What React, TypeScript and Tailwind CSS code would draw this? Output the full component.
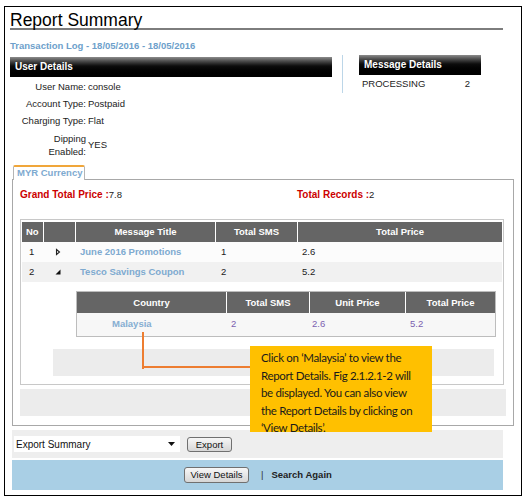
import React from 'react';

const userRows: [string, string][] = [
  ['User Name:', 'console'],
  ['Account Type:', 'Postpaid'],
  ['Charging Type:', 'Flat'],
];

const RightArrow = () => (
  <svg width="6" height="8" viewBox="0 0 6 8">
    <path d="M1.5 1.5 L4.5 4 L1.5 6.5 Z" fill="#fff" stroke="#222" strokeWidth="1.1" />
  </svg>
);

const DownArrow = () => (
  <svg width="6" height="6" viewBox="0 0 6 6">
    <path d="M5.5 0.5 L5.5 5.5 L0.5 5.5 Z" fill="#111" />
  </svg>
);

export default function App() {
  return (
    <div className="w-[526px] h-[500px] bg-white pt-[6px] pl-[4px] font-['Liberation_Sans',Arial,sans-serif] text-[9.5px] text-[#222]">
      <div className="relative w-[518px] h-[490px] border border-black">
        {/* title */}
        <div className="ml-[5px] mt-[5px] w-[493px]">
          <h1 className="h-[16px] text-[17.5px] leading-[16px] text-black">Report Summary</h1>
          <div className="h-[2px] bg-[#7d7d7d]" />
        </div>

        <div className="ml-[5px] mt-[10px] leading-[12px] font-bold text-[#6d9fcb]">
          Transaction Log - 18/05/2016 - 18/05/2016
        </div>

        {/* user + message details */}
        <div className="mt-[3px] h-[110px] flex">
          <div className="ml-[5px] w-[322px] pt-[2px]">
            <div className="h-[20px] pl-[5px] leading-[20px] text-[10px] font-bold text-white bg-linear-to-b from-[#8c8c8c] via-[#0d0d0d] via-45% to-black">
              User Details
            </div>
            <div className="mt-[4px] flex flex-col gap-[5px]">
              {userRows.map(([label, value]) => (
                <div key={label} className="flex leading-[12px]">
                  <span className="w-[76px] text-right">{label}</span>
                  <span className="ml-[2px]">{value}</span>
                </div>
              ))}
              <div className="flex items-center">
                <span className="w-[76px] text-right leading-[13px]">
                  Dipping
                  <br />
                  Enabled:
                </span>
                <span className="ml-[2px]">YES</span>
              </div>
            </div>
          </div>
          <div className="ml-[10px] w-px h-[38px] bg-[#bcd6e8]" />
          <div className="ml-[16px] w-[122px]">
            <div className="h-[20px] pl-[5px] leading-[20px] text-[10px] font-bold text-white bg-linear-to-b from-[#8c8c8c] via-[#0d0d0d] via-45% to-black">
              Message Details
            </div>
            <div className="mt-[3px] flex justify-between pl-[3px] pr-[11px] leading-[12px]">
              <span>PROCESSING</span>
              <span>2</span>
            </div>
          </div>
        </div>

        {/* tab */}
        <div className="relative z-10 ml-[8px] w-[72px] h-[15px] bg-white border-t-2 border-t-[#f0a63a] border-x border-x-[#b5b5b5] rounded-t-[2px] pl-[3px] leading-[12px] font-bold text-[#7eaad0]">
          MYR Currency
        </div>
        <div className="-mt-px ml-[7px] w-[502px] h-[247px] border border-[#a8a8a8]">
          <div className="mt-[9px] pl-[7px] flex leading-[12px]">
            <span className="w-[277px]">
              <span className="text-[10px] font-bold text-[#cc0000]">Grand Total Price :</span>
              <span>7.8</span>
            </span>
            <span>
              <span className="text-[10px] font-bold text-[#cc0000]">Total Records :</span>
              <span>2</span>
            </span>
          </div>

          {/* records table */}
          <div className="mt-[18px] ml-[7px] w-[484px] h-[166px] border border-[#c8c8c8] px-px pt-[2px]">
            <div className="flex gap-px h-[20px] leading-[20px] font-bold text-white">
              <div className="w-[21px] bg-[#656565] pl-[4px]">No</div>
              <div className="w-[31px] bg-[#656565]" />
              <div className="w-[139px] bg-[#656565] text-center">Message Title</div>
              <div className="w-[81px] bg-[#656565] text-center">Total SMS</div>
              <div className="w-[204px] bg-[#656565] text-center">Total Price</div>
            </div>
            <div className="flex h-[20px] items-center bg-[#fcfcfc]">
              <div className="w-[22px] pl-[7px]">1</div>
              <div className="w-[32px] pl-[11px] flex items-center"><RightArrow /></div>
              <div className="w-[140px] pl-[4px] font-bold text-[#7eaad0]">June 2016 Promotions</div>
              <div className="w-[82px] pl-[5px]">1</div>
              <div className="pl-[4px]">2.6</div>
            </div>
            <div className="flex h-[20px] items-center bg-[#f1f1f1]">
              <div className="w-[22px] pl-[7px]">2</div>
              <div className="w-[32px] pl-[11px] flex items-center"><DownArrow /></div>
              <div className="w-[140px] pl-[4px] font-bold text-[#7eaad0]">Tesco Savings Coupon</div>
              <div className="w-[82px] pl-[5px]">2</div>
              <div className="pl-[4px]">5.2</div>
            </div>

            {/* country sub table */}
            <div className="mt-[9px] ml-[54px] w-[420px] border border-[#bdbdbd]">
              <div className="flex gap-px h-[21px] leading-[21px] font-bold text-white bg-white">
                <div className="w-[149px] bg-[#656565] text-center">Country</div>
                <div className="w-[82px] bg-[#656565] text-center">Total SMS</div>
                <div className="w-[95px] bg-[#656565] text-center">Unit Price</div>
                <div className="w-[89px] bg-[#656565] text-center">Total Price</div>
              </div>
              <div className="flex h-[23px] items-center bg-[#f7f7f7] text-[#7b5fb0]">
                <div className="w-[150px] pl-[35px] font-bold text-[#86aed2]">Malaysia</div>
                <div className="w-[83px] pl-[4px]">2</div>
                <div className="w-[96px] pl-[2px]">2.6</div>
                <div className="pl-[4px]">5.2</div>
              </div>
            </div>
            <div className="mt-[12px] ml-[31px] w-[441px] h-[27px] bg-[#ececec]" />
          </div>

          <div className="mt-[4px] ml-[7px] w-[486px] h-[27px] bg-[#ececec]" />
        </div>

        {/* export */}
        <div className="mt-[4px] ml-[7px] w-[491px] h-[28px] bg-[#eeeeee] flex items-center pl-[2px]">
          <div className="w-[166px] h-[16px] bg-white flex items-center justify-between pl-[2px] pr-[5px] text-[10px] text-[#111]">
            <span>Export Summary</span>
            <svg width="7" height="4" viewBox="0 0 7 4">
              <path d="M0 0 L7 0 L3.5 4 Z" fill="#111" />
            </svg>
          </div>
          <button className="ml-[7px] w-[45px] h-[15px] rounded-[3px] border border-[#707070] bg-linear-to-b from-[#f7f7f7] to-[#d6d6d6] text-[9.5px] leading-[13px] text-[#111]">
            Export
          </button>
        </div>

        <div className="mt-[2px] ml-[7px] w-[491px] h-[30px] bg-[#a9cfe5] flex items-center pl-[172px]">
          <button className="w-[65px] h-[16px] rounded-[3px] border border-[#707070] bg-linear-to-b from-[#f7f7f7] to-[#d6d6d6] text-[9.5px] leading-[14px] text-[#111]">
            View Details
          </button>
          <span className="ml-[12px] text-[#333]">|</span>
          <span className="ml-[8px] font-bold text-[#222]">Search Again</span>
        </div>

        {/* callout */}
        <div className="absolute left-[137px] top-[325px] w-[2px] h-[37px] bg-[#ed7d31]" />
        <div className="absolute left-[137px] top-[359px] w-[108px] h-[2px] bg-[#ed7d31]" />
        <div className="absolute left-[245px] top-[339px] w-[182px] h-[86px] bg-[#ffc000] pl-[11px] pt-[3px] font-['Lato',sans-serif] text-[11.5px] tracking-[-0.35px] leading-[17.5px] text-[#1a1a1a] whitespace-nowrap">
          Click on ‘Malaysia’ to view the
          <br />
          Report Details. Fig 2.1.2.1-2 will
          <br />
          be displayed. You can also view
          <br />
          the Report Details by clicking on
          <br />
          ‘View Details’.
        </div>
      </div>
    </div>
  );
}
